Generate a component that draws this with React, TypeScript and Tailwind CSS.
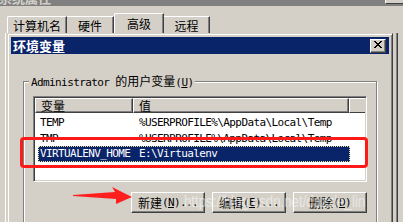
import React from "react";

const cjk = "font-['Noto_Sans_CJK_SC',sans-serif]";
const mono = "font-['DejaVu_Sans_Mono','Noto_Sans_CJK_SC',monospace] text-[11px] tracking-[-0.6px]";

const WinButton: React.FC<{label: string; hot: string; tail?: string}> = ({label, hot, tail}) => (
	<div className="w-[74px] h-[21px] flex items-center justify-center bg-[#d4d0c8] border border-t-white border-l-white border-r-[#404040] border-b-[#404040] shadow-[inset_-1px_-1px_0_#808080] text-black leading-[13px]">
		<span className={`${cjk} text-[12px]`}>{label}</span>
		<span className={mono}>
			(<span className="underline">{hot}</span>){tail}
		</span>
	</div>
);

const rows = [
	{name: "TEMP", value: "%USERPROFILE%\\AppData\\Local\\Temp"},
	{name: "TMP", value: "%USERPROFILE%\\AppData\\Local\\Temp"},
];

export default function App() {
	return (
		<div className="relative w-[403px] h-[222px] overflow-hidden bg-[#d4d0c8] select-none">
			{/* parent window title, cut off */}
			<div className="h-[6px] bg-[#808080] overflow-hidden flex justify-between">
				<span className={`${cjk} -mt-[10px] -ml-[1px] text-[13px] font-bold text-[#d4d0c8] leading-[15px]`}>
					系统属性
				</span>
				<div className="w-[18px] h-[4px] bg-[#d4d0c8] border-b border-b-[#404040] border-l border-l-white" />
			</div>

			{/* tabs */}
			<div className={`${cjk} mt-[7px] h-[20px] flex items-end pl-[7px] text-[12px] leading-[13px] text-black`}>
				<div className="w-[60px] h-[17px] flex items-center justify-center rounded-tl-[2px] border-t border-l border-t-white border-l-white border-r border-r-[#404040] shadow-[inset_-1px_0_0_#808080]">
					计算机名
				</div>
				<div className="w-[47px] h-[17px] flex items-center justify-center border-t border-t-white border-r border-r-[#404040] shadow-[inset_-1px_0_0_#808080]">
					硬件
				</div>
				<div className="w-[50px] h-[20px] flex items-center justify-center pb-[1px] rounded-tl-[2px] border-t border-l border-t-white border-l-white border-r border-r-[#404040] shadow-[inset_-1px_0_0_#808080]">
					高级
				</div>
				<div className="w-[46px] h-[17px] flex items-center justify-center border-t border-t-white border-r border-r-[#404040] shadow-[inset_-1px_0_0_#808080]">
					远程
				</div>
			</div>

			{/* tab panel */}
			<div className="ml-[5px] w-[393px] h-[200px] border-l border-l-white border-r border-r-[#404040] shadow-[inset_-1px_0_0_#808080]">
				{/* environment variables dialog */}
				<div className="ml-[1px] w-[386px] h-[200px] border border-t-[#d4d0c8] border-l-[#d4d0c8] border-r-[#404040] border-b-[#404040] shadow-[inset_1px_1px_0_#fff,inset_-1px_-1px_0_#808080] p-[3px]">
					<div className="h-[17px] bg-[#0a246a] flex items-center justify-between pl-[2px] pr-[3px]">
						<span className={`${cjk} text-[13px] font-bold text-white leading-[14px]`}>环境变量</span>
						<div className="w-[16px] h-[14px] bg-[#d4d0c8] border border-t-white border-l-white border-r-[#404040] border-b-[#404040] shadow-[inset_-1px_-1px_0_#808080] flex items-center justify-center">
							<svg width="10" height="9" viewBox="0 0 10 9" shapeRendering="crispEdges">
								<path d="M1 0h2v1h1v1h2V1h1V0h2v1H8v1H7v1H6v1h1v1h1v1h1v1H7V6H6V5H4v1H3v1H1V6h1V5h1V4h1V3H3V2H2V1H1z" fill="#000" />
							</svg>
						</div>
					</div>

					<fieldset className="mx-[12px] mt-[20px] h-[170px] min-w-0 border border-[#808080] shadow-[1px_1px_0_#fff,inset_1px_1px_0_#fff]">
						<legend className="ml-[5px] px-[2px] bg-[#d4d0c8] leading-[13px] text-black">
							<span className={mono}>Administrator </span>
							<span className={`${cjk} text-[12px]`}>的用户变量</span>
							<span className={mono}>
								(<span className="underline">U</span>)
							</span>
						</legend>

						{/* list view */}
						<div className="ml-[9px] mt-[7px] w-[334px] h-[86px] bg-white border border-t-[#808080] border-l-[#808080] border-r-white border-b-white shadow-[inset_1px_1px_0_#404040,inset_-1px_-1px_0_#d4d0c8] p-[1px] flex flex-col">
							<div className={`${cjk} h-[15px] flex text-[12px] leading-[13px] text-black`}>
								<div className="w-[98px] pl-[5px] bg-[#d4d0c8] border-t border-l border-t-white border-l-white border-r border-b border-r-[#404040] border-b-[#404040] shadow-[inset_-1px_-1px_0_#808080]">
									变量
								</div>
								<div className="w-[216px] pl-[5px] bg-[#d4d0c8] border-t border-l border-t-white border-l-white border-r border-b border-r-[#404040] border-b-[#404040] shadow-[inset_-1px_-1px_0_#808080]">
									值
								</div>
								<div className="flex-1 bg-[#d4d0c8] border-t border-l border-t-white border-l-white border-b border-b-[#404040]" />
							</div>

							<div className={`${mono} mt-[1px] flex flex-col text-black leading-[13px]`}>
								{rows.map((r) => (
									<div key={r.name} className="h-[16px] flex items-center whitespace-nowrap">
										<div className="w-[98px] pl-[5px]">{r.name}</div>
										<div className="pl-[6px]">{r.value}</div>
									</div>
								))}
								<div className="ml-[3px] w-[312px] h-[16px] flex items-start pt-[1px] leading-[11px] whitespace-nowrap bg-[#0a246a] text-white border border-dotted border-[#e8df9a]">
									<div className="w-[95px] pl-[1px]">VIRTUALENV_HOME</div>
									<div className="pl-[5px]">E:\Virtualenv</div>
								</div>
							</div>
						</div>

						<div className="ml-[9px] mt-[10px] w-[334px] flex justify-end gap-[7px]">
							<WinButton label="新建" hot="N" tail="..." />
							<WinButton label="编辑" hot="E" tail="..." />
							<WinButton label="删除" hot="D" />
						</div>
					</fieldset>
				</div>
			</div>

			{/* red annotations */}
			<div className="absolute left-[20px] top-[137px] w-[348px] h-[31px] border-[3px] border-[#ff1a1a] rounded-[4px]" />
			<svg className="absolute left-0 top-0" width="403" height="222" viewBox="0 0 403 222">
				<polygon points="73,195 115,192 112,187 132,197 116,204 116,199 73,196" fill="#ff1f1f" />
			</svg>

			{/* watermark */}
			<div className="absolute left-[184px] top-[192px] text-[17px] leading-[20px] font-['Liberation_Sans',sans-serif] text-white/50 origin-left scale-x-[0.78] whitespace-nowrap">
				https://blog.csdn.net/dazzle_lin
			</div>
		</div>
	);
}
